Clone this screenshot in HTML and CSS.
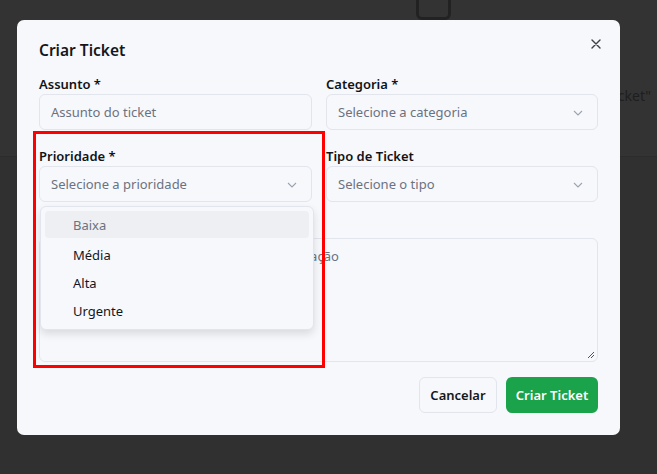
FILE: index.html
```html
<!DOCTYPE html>
<html lang="pt">
<head>
<meta charset="utf-8">
<link rel="stylesheet" href="styles.css">
</head>
<body>
<div class="page">
  <div class="page-top">
    <div class="ghost-box"></div>
    <div class="ghost-text">Ticket"</div>
  </div>
  <div class="page-bottom"></div>
</div>

<div class="dialog">
  <div class="dialog-head">
    <h2 class="title">Criar Ticket</h2>
    <button class="close" aria-label="Fechar">
      <svg width="10" height="10" viewBox="0 0 10 10"><path d="M1 1L9 9M9 1L1 9" stroke="#3d3f46" stroke-width="1.4" stroke-linecap="round"/></svg>
    </button>
  </div>
  <div class="form">
    <div class="field">
      <label class="label">Assunto *</label>
      <div class="input"><span class="ph">Assunto do ticket</span></div>
    </div>
    <div class="field">
      <label class="label">Categoria *</label>
      <div class="input select"><span class="ph">Selecione a categoria</span>
        <svg class="chev" width="10" height="6" viewBox="0 0 10 6"><path d="M1 1L5 5L9 1" fill="none" stroke="#9ca3af" stroke-width="1.1"/></svg>
      </div>
    </div>
    <div class="field rel">
      <label class="label">Prioridade *</label>
      <div class="input select"><span class="ph">Selecione a prioridade</span>
        <svg class="chev" width="10" height="6" viewBox="0 0 10 6"><path d="M1 1L5 5L9 1" fill="none" stroke="#9ca3af" stroke-width="1.1"/></svg>
      </div>
      <div class="menu">
        <div class="opt active">Baixa</div>
        <div class="opt">Média</div>
        <div class="opt">Alta</div>
        <div class="opt">Urgente</div>
      </div>
    </div>
    <div class="field">
      <label class="label">Tipo de Ticket</label>
      <div class="input select"><span class="ph">Selecione o tipo</span>
        <svg class="chev" width="10" height="6" viewBox="0 0 10 6"><path d="M1 1L5 5L9 1" fill="none" stroke="#9ca3af" stroke-width="1.1"/></svg>
      </div>
    </div>
    <div class="field wide">
      <label class="label hidden-label">Descrição *</label>
      <div class="textarea"><span class="ph">Descreva em detalhe o problema ou solicitação</span>
        <svg class="grip" width="8" height="8" viewBox="0 0 8 8"><path d="M7 1L1 7M7 4L4 7" stroke="#555" stroke-width="1"/></svg>
      </div>
    </div>
  </div>
  <div class="footer">
    <button class="btn btn-outline">Cancelar</button>
    <button class="btn btn-primary">Criar Ticket</button>
  </div>
</div>

<div class="annot"></div>
</body>
</html>
```
FILE: styles.css
```css
* { box-sizing: border-box; }
html, body { margin: 0; padding: 0; }
body {
  width: 657px;
  height: 474px;
  overflow: hidden;
  font-family: "Noto Sans", "Open Sans", sans-serif;
  background: #303030;
  position: relative;
}
.page { display: flex; flex-direction: column; height: 474px; }
.page-top {
  height: 157px;
  background: #333333;
  border-bottom: 1px solid #2c2c2c;
  position: relative;
}
.page-bottom { flex: 1; background: #303030; }
.ghost-box {
  position: absolute;
  left: 416px;
  top: -10px;
  width: 35px;
  height: 30px;
  border: 3px solid #222;
  border-radius: 6px;
}
.ghost-text {
  position: absolute;
  right: 6px;
  top: 86px;
  font-size: 14px;
  color: #1e1e1e;
}

.dialog {
  position: absolute;
  left: 17px;
  top: 20px;
  width: 603px;
  height: 415px;
  background: #f7f8fc;
  border-radius: 7px;
  padding: 20px 22px 22px 22px;
  display: flex;
  flex-direction: column;
}
.dialog-head {
  display: flex;
  justify-content: space-between;
  align-items: flex-start;
  height: 20px;
}
.title {
  margin: 0;
  font-size: 15.5px;
  line-height: 20px;
  font-weight: 600;
  color: #14161c;
}
.close {
  border: 0;
  background: none;
  padding: 0;
  margin-top: -2px;
  margin-right: -4px;
  width: 12px;
  height: 12px;
  display: flex;
  align-items: center;
  justify-content: center;
}
.form {
  margin-top: 16px;
  display: grid;
  grid-template-columns: 273px 272px;
  column-gap: 14px;
  row-gap: 18px;
}
.field { display: flex; flex-direction: column; gap: 2px; }
.rel { position: relative; }
.wide { grid-column: 1 / 3; }
.label {
  font-size: 13px;
  line-height: 16px;
  font-weight: 600;
  color: #111318;
}
.hidden-label { visibility: hidden; }
.input {
  height: 36px;
  border: 1px solid #e3e5ec;
  border-radius: 6px;
  background: #f7f8fc;
  display: flex;
  align-items: center;
  justify-content: space-between;
  padding: 0 14px 0 11px;
}
.ph {
  font-size: 13px;
  color: #6b7280;
  white-space: nowrap;
}
.chev { margin-top: 1px; }
.textarea {
  height: 124px;
  border: 1px solid #e3e5ec;
  border-radius: 6px;
  padding: 5px 11px;
  position: relative;
}
.grip { position: absolute; right: 2px; bottom: 2px; }

.menu {
  position: absolute;
  left: 1px;
  top: 58px;
  width: 274px;
  background: #f7f8fc;
  border: 1px solid #e3e5ec;
  border-radius: 6px;
  box-shadow: 0 4px 8px rgba(0,0,0,0.12);
  padding: 4px;
  display: flex;
  flex-direction: column;
  z-index: 2;
}
.opt {
  height: 28px;
  display: flex;
  align-items: center;
  padding-left: 28px;
  font-size: 13px;
  color: #14161c;
  border-radius: 4px;
}
.opt.active { background: #eeeff3; color: #6b7280; height: 27px; margin-bottom: 3px; }

.footer {
  margin-top: 15px;
  display: flex;
  justify-content: flex-end;
  gap: 9px;
}
.btn {
  height: 36px;
  border-radius: 6px;
  font-family: inherit;
  font-size: 13px;
  font-weight: 600;
  padding: 0;
  white-space: nowrap;
}
.btn-outline {
  background: #f7f8fc;
  border: 1px solid #e3e5ec;
  color: #14161c;
  width: 78px;
}
.btn-primary {
  background: #1aa34a;
  border: 0;
  color: #fff;
  width: 92px;
}
.annot {
  position: absolute;
  left: 33px;
  top: 131px;
  width: 292px;
  height: 237px;
  border: 3px solid #ff0000;
  pointer-events: none;
}
```
